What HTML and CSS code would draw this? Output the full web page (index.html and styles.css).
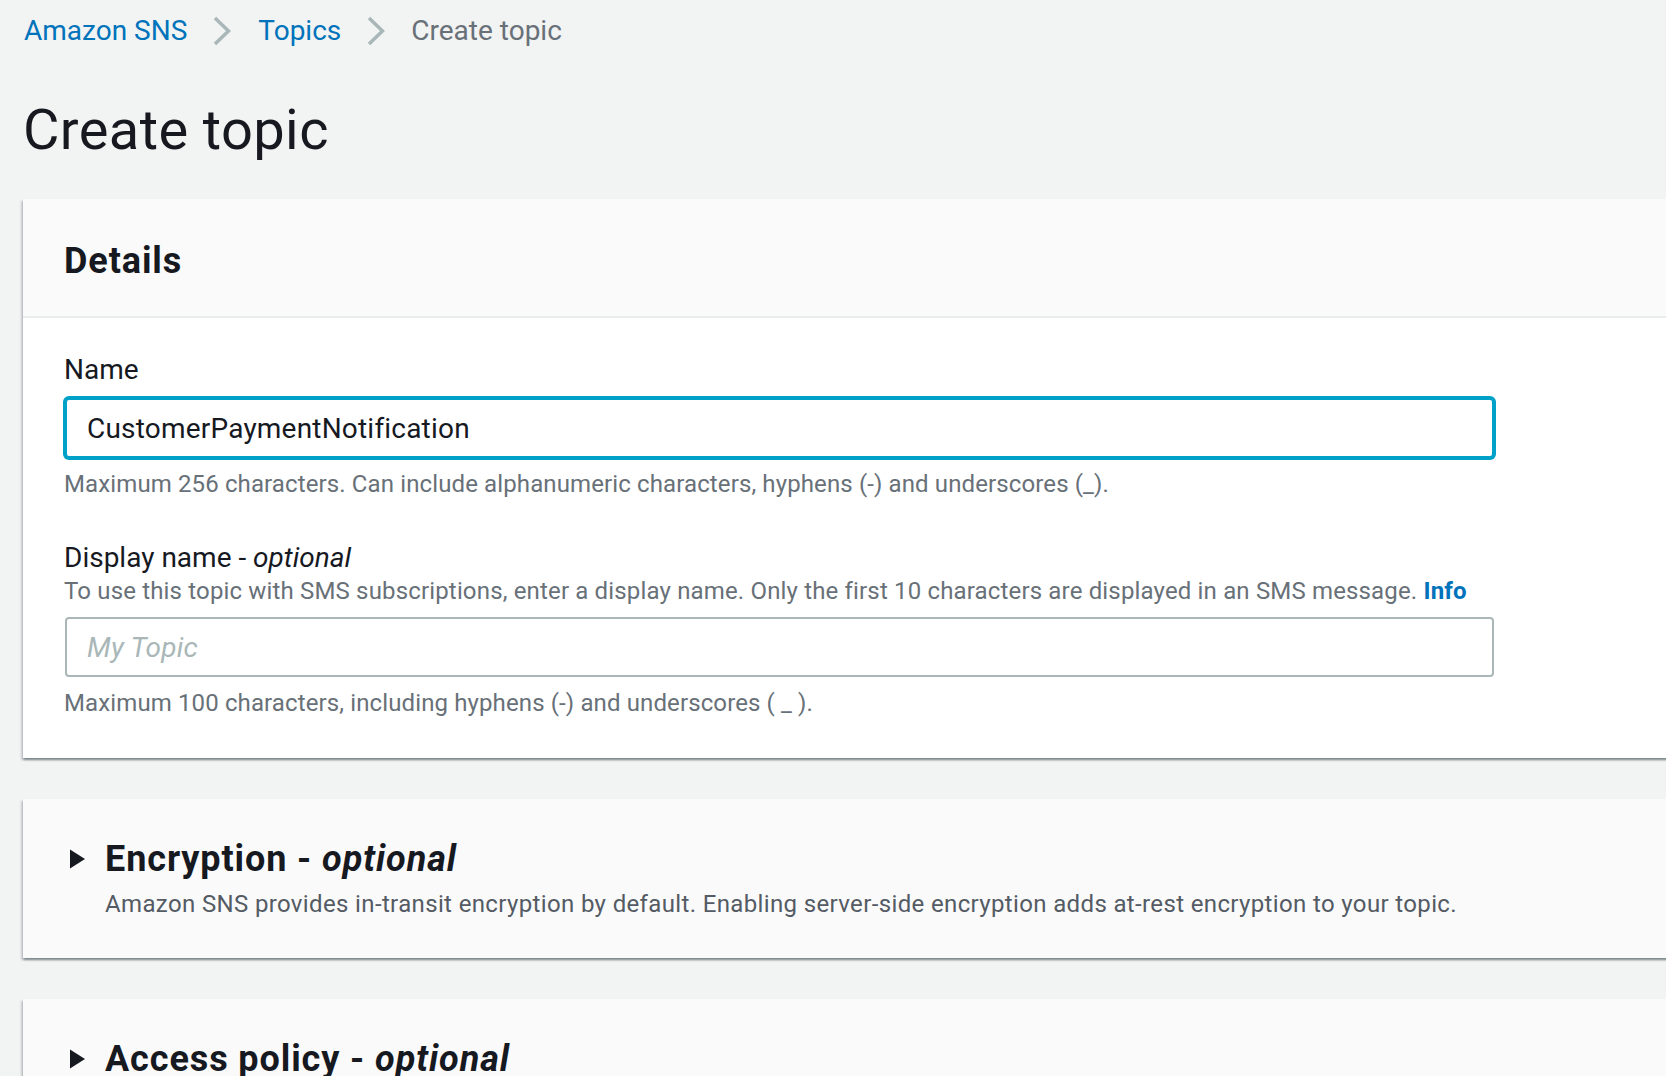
FILE: index.html
```html
<!DOCTYPE html>
<html lang="en">
<head>
<meta charset="utf-8">
<title>Create topic</title>
<link rel="stylesheet" href="styles.css">
</head>
<body>
<div class="page">
  <nav class="breadcrumbs">
    <a class="crumb crumb-link" href="#">Amazon SNS</a>
    <svg class="chevron" width="18" height="30" viewBox="0 0 18 30"><polyline points="2,2 15.5,15 2,28" fill="none" stroke="#aab7b8" stroke-width="3.5"/></svg>
    <a class="crumb crumb-link" href="#">Topics</a>
    <svg class="chevron" width="18" height="30" viewBox="0 0 18 30"><polyline points="2,2 15.5,15 2,28" fill="none" stroke="#aab7b8" stroke-width="3.5"/></svg>
    <span class="crumb crumb-current">Create topic</span>
  </nav>

  <h1 class="page-title">Create topic</h1>

  <section class="panel">
    <div class="panel-header">
      <h2 class="panel-title">Details</h2>
    </div>
    <div class="panel-body">
      <div class="field">
        <label class="field-label" for="name">Name</label>
        <input id="name" class="text-input is-focused" type="text" value="CustomerPaymentNotification">
        <p class="hint">Maximum 256 characters. Can include alphanumeric characters, hyphens (-) and underscores (_).</p>
      </div>
      <div class="field field-spaced">
        <label class="field-label" for="display">Display name - <i>optional</i></label>
        <p class="field-desc">To use this topic with SMS subscriptions, enter a display name. Only the first 10 characters are displayed in an SMS message. <a class="info" href="#">Info</a></p>
        <input id="display" class="text-input" type="text" placeholder="My Topic">
        <p class="hint">Maximum 100 characters, including hyphens (-) and underscores ( _ ).</p>
      </div>
    </div>
  </section>

  <section class="panel panel-collapsed">
    <div class="expander">
      <svg class="caret" width="16" height="20" viewBox="0 0 16 20"><polygon points="0,0.5 15,10 0,19.5" fill="#16191f"/></svg>
      <div class="expander-text">
        <h2 class="panel-title">Encryption - <i>optional</i></h2>
        <p class="expander-desc">Amazon SNS provides in-transit encryption by default. Enabling server-side encryption adds at-rest encryption to your topic.</p>
      </div>
    </div>
  </section>

  <section class="panel panel-collapsed">
    <div class="expander">
      <svg class="caret" width="16" height="20" viewBox="0 0 16 20"><polygon points="0,0.5 15,10 0,19.5" fill="#16191f"/></svg>
      <div class="expander-text">
        <h2 class="panel-title">Access policy - <i>optional</i></h2>
        <p class="expander-desc">This policy defines who can access your topic. By default, only the topic owner can publish or subscribe to the topic.</p>
      </div>
    </div>
  </section>
</div>
</body>
</html>
```

FILE: styles.css
```css
html, body {
  margin: 0;
  padding: 0;
  overflow: hidden;
  background: #f2f3f3;
}

body {
  font-family: Roboto, "Noto Sans", "Liberation Sans", sans-serif;
  color: #16191f;
}

.page {
  padding: 11px 0 0 23px;
}

.breadcrumbs {
  display: flex;
  align-items: center;
  height: 40px;
  font-size: 28px;
  line-height: 40px;
}

.crumb {
  text-decoration: none;
  white-space: nowrap;
}

.crumb-link {
  color: #0073bb;
  padding-left: 1px;
}

.crumb-current {
  color: #687078;
}

.chevron {
  display: block;
  margin: 0 26px;
}

.page-title {
  margin: 47px 0 0 0;
  font-size: 56px;
  line-height: 64px;
  font-weight: 400;
  letter-spacing: 0.4px;
}

.panel {
  width: 1720px;
  margin-top: 37px;
  background: #ffffff;
  box-shadow: 0 2px 2px 0 rgba(0, 28, 36, 0.3), 2px 2px 2px 0 rgba(0, 28, 36, 0.15), -2px 2px 2px 0 rgba(0, 28, 36, 0.15);
}

.panel-header {
  background: #fafafa;
  padding: 40px 41px 33px;
  border-bottom: 2px solid #eaeded;
}

.panel-title {
  margin: 0;
  font-size: 36px;
  line-height: 44px;
  font-weight: 700;
  letter-spacing: 0.9px;
}

.panel-body {
  padding: 35px 41px 39px;
}

.field {
  display: flex;
  flex-direction: column;
  align-items: flex-start;
}

.field-spaced {
  margin-top: 41px;
}

.field-label {
  font-size: 28px;
  line-height: 34px;
  color: #16191f;
}

.field-desc {
  margin: 0;
  font-size: 24px;
  line-height: 32px;
  color: #687078;
  letter-spacing: 0.16px;
}

.info {
  color: #0073bb;
  font-weight: 700;
  text-decoration: none;
}

.text-input {
  box-sizing: border-box;
  width: 1429px;
  height: 60px;
  margin: 11px 0 0 1px;
  padding: 0 20px;
  border: 2px solid #aab7b8;
  border-radius: 4px;
  background: #ffffff;
  font-family: Roboto, "Noto Sans", "Liberation Sans", sans-serif;
  font-size: 28px;
  letter-spacing: 0.2px;
  color: #16191f;
  outline: none;
}

.field-desc + .text-input {
  margin-top: 10px;
}

.text-input::placeholder {
  color: #aab7b8;
  font-style: italic;
}

.text-input.is-focused {
  border-color: #00a1c9;
  box-shadow: 0 0 0 2px #00a1c9;
}

.hint {
  margin: 10px 0 0;
  font-size: 24px;
  line-height: 32px;
  color: #687078;
  letter-spacing: 0.12px;
}

.panel-collapsed {
  margin-top: 41px;
  background: #fafafa;
}

.expander {
  display: flex;
  align-items: flex-start;
  padding: 38px 41px 38px;
}

.caret {
  display: block;
  flex: none;
  margin: 12px 19px 0 6px;
}

.expander-desc {
  margin: 7px 0 0;
  font-size: 24px;
  line-height: 32px;
  color: #545b64;
  letter-spacing: 0.36px;
}
```
